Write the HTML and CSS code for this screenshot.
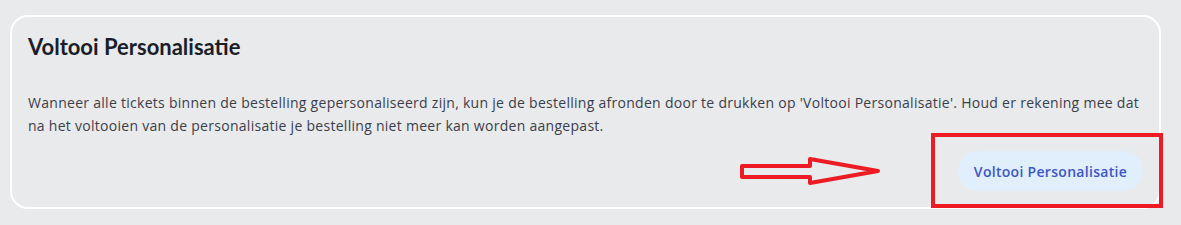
FILE: index.html
```html
<!DOCTYPE html>
<html lang="nl">
<head>
  <meta charset="UTF-8">
  <meta name="viewport" content="width=device-width, initial-scale=1.0">
  <title>Voltooi Personalisatie</title>
  <link rel="stylesheet" href="styles.css">
</head>
<body>

  <!-- Personalisatie kaart -->
  <div class="card">
    <h2 class="card-title">Voltooi Personalisatie</h2>
    <p class="card-text">Wanneer alle tickets binnen de bestelling gepersonaliseerd zijn, kun je de bestelling afronden door te drukken op 'Voltooi Personalisatie'. Houd er rekening mee dat na het voltooien van de personalisatie je bestelling niet meer kan worden aangepast.</p>
    <div class="card-actions">
      <button type="button" class="finish-btn">Voltooi Personalisatie</button>
    </div>
  </div>

  <!-- Annotaties -->
  <svg class="note-arrow" width="146" height="34" viewBox="0 0 146 34">
    <polygon points="3,9 71,9 71,2 139,14 71,26 71,20 3,20" fill="none" stroke="#ed1c24" stroke-width="4" stroke-linejoin="round"/>
  </svg>
  <div class="note-box"></div>

</body>
</html>
```

FILE: styles.css
```css
* {
  margin: 0;
  padding: 0;
  box-sizing: border-box;
}

body {
  position: relative;
  background-color: #e9eaec;
  font-family: 'Open Sans', 'Noto Sans', sans-serif;
  color: #3b3e4b;
  padding: 15px 20px 0 10px;
}

.card {
  border: 2px solid #fff;
  border-radius: 18px;
  padding: 16px;
}

.card-title {
  font-family: 'Lato', sans-serif;
  font-size: 22px;
  line-height: 28px;
  font-weight: 700;
  color: #1a1e29;
  margin-bottom: 30px;
}

.card-text {
  font-size: 14px;
  line-height: 23px;
  letter-spacing: 0.28px;
  margin-right: -6px;
}

.card-actions {
  display: flex;
  justify-content: flex-end;
  margin-top: 14px;
}

.finish-btn {
  height: 40px;
  width: 185px;
  border: none;
  border-radius: 20px;
  background-color: #e1eefb;
  color: #3b56c6;
  font-family: inherit;
  font-size: 14px;
  font-weight: 600;
  letter-spacing: 0.3px;
}

/* annotations on top of the screenshot */
.note-arrow {
  position: absolute;
  left: 739px;
  top: 157px;
}

.note-box {
  position: absolute;
  left: 931px;
  top: 133px;
  width: 232px;
  height: 75px;
  border: 4px solid #ed1c24;
}
```
